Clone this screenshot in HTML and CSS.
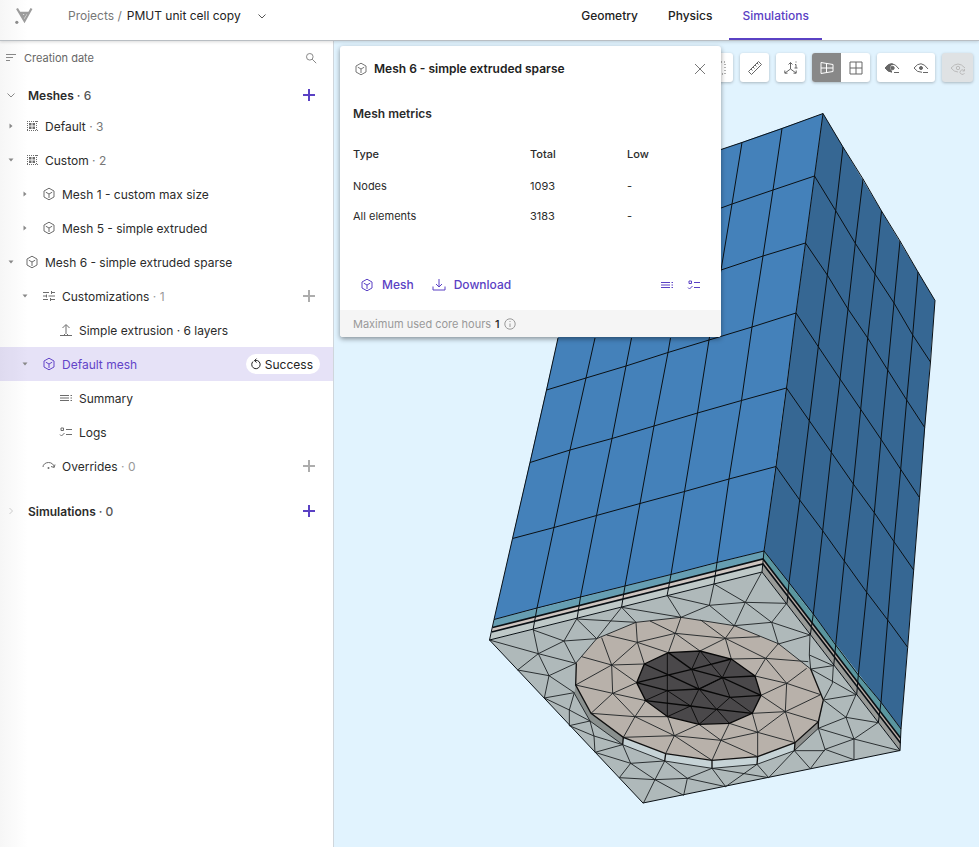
FILE: index.html
```html
<!DOCTYPE html>
<html lang="en">
<head>
<meta charset="utf-8">
<title>PMUT unit cell copy</title>
<link rel="stylesheet" href="styles.css">
</head>
<body>
<svg class="sprite" aria-hidden="true">
  <symbol id="cube" viewBox="0 0 14 14"><path d="M7 1.200 12 4v6L7 12.800 2 10V4ZM3.800 5.200 7 7l3.200-1.800M7 7v4"/></symbol>
  <symbol id="folder-grid" viewBox="0 0 14 14"><path d="M2 2.500h11M2 11.500h11M2.500 2v10M11.500 2v10" stroke-dasharray="1 1"/><path d="M4 4h2.500v2.500H4zM7.500 4H10v2.500H7.500zM4 7.500h2.500V10H4zM7.500 7.500H10V10H7.500z" fill="currentColor" stroke="none"/></symbol>
  <symbol id="plus" viewBox="0 0 14 14"><path d="M7 1v12M1 7h12"/></symbol>
  <symbol id="caret-down" viewBox="0 0 6 6"><path d="M.5 1.500h5L3 4.500z" fill="currentColor" stroke="none"/></symbol>
  <symbol id="caret-right" viewBox="0 0 6 6"><path d="M1.500.5v5l3-2.500z" fill="currentColor" stroke="none"/></symbol>
  <symbol id="chevron-down" viewBox="0 0 10 10"><path d="m1.500 3.500 3.500 3.500 3.500-3.500"/></symbol>
  <symbol id="chevron-right" viewBox="0 0 10 10"><path d="m3.500 2 3 3-3 3"/></symbol>
  <symbol id="summary" viewBox="0 0 14 14"><path d="M1 4.500h9M1 7h9M1 9.500h9M11.500 4.500h1.500M11.500 7h1.500M11.500 9.500h1.500"/></symbol>
  <symbol id="logs" viewBox="0 0 14 14"><path d="M2 3h2.500v2.500H2zM7 4.500h6M7 9.500h6M1 9.500l1.500 1.500 3-3"/></symbol>
  <symbol id="tune" viewBox="0 0 14 14"><path d="M1 3.500h6M9.500 3.500H13M9.500 2v3M1 7h3M6.500 7H13M4.500 5.500v3M1 10.500h5M8.500 10.500H13M8.500 9v3"/></symbol>
  <symbol id="extrude" viewBox="0 0 14 14"><path d="M7 11V2M3.500 5 7 1.500 10.500 5M1 12.500h4.500V11M13 12.500H8.500V11M1 12.500h12"/></symbol>
  <symbol id="override" viewBox="0 0 14 14"><path d="M1 8a5.500 4.500 0 0 1 11 0M9 7.500 12.200 8.500 13 5.500"/><circle cx="6.500" cy="9" r="1" fill="currentColor" stroke="none"/></symbol>
  <symbol id="download" viewBox="0 0 14 14"><path d="M7 1v7.500M4 6l3 3 3-3M1 8.500V12h12V8.500"/></symbol>
</svg>

<header class="topbar">
  <a class="logo" href="#" aria-label="Home">
    <svg viewBox="0 0 20 18"><path d="M3 1.500 10.500 14 17.500 1.500M5.500 5.800h9M6.500 6.500 10 9.500l2-3" fill="none" stroke="#9c9c9c" stroke-width="2.200"/><circle cx="2.800" cy="15.300" r="1.600" fill="#8c8c8c"/></svg>
  </a>
  <nav class="crumbs" aria-label="Breadcrumb">
    <a href="#">Projects /</a>
    <button class="project" type="button">PMUT unit cell copy <svg class="icon i10"><use href="#chevron-down"/></svg></button>
  </nav>
  <nav class="tabs" aria-label="Sections">
    <a href="#">Geometry</a>
    <a href="#">Physics</a>
    <a class="active" href="#" aria-current="page">Simulations</a>
  </nav>
</header>

<div class="workspace">
  <aside class="sidebar">
    <div class="filter">
      <button type="button" class="sort"><svg class="icon i12" viewBox="0 0 12 12"><path d="M1 2.500h10M1 5.500h7M1 8.500h4"/></svg>Creation date</button>
      <button type="button" class="search" aria-label="Search"><svg class="icon i12" viewBox="0 0 12 12"><circle cx="4.800" cy="4.800" r="3.300"/><path d="m7.200 7.200 4 4"/></svg></button>
    </div>

    <div class="section">
      <button type="button" class="toggle" aria-label="Collapse meshes"><svg class="icon i10"><use href="#chevron-down"/></svg></button>
      <h2>Meshes <span>· 6</span></h2>
      <button type="button" class="add primary" aria-label="Add mesh"><svg class="icon i14"><use href="#plus"/></svg></button>
    </div>
    <ul class="tree">
      <li class="row l0"><button type="button" class="toggle" aria-label="Expand"><svg class="icon i6"><use href="#caret-right"/></svg></button><svg class="icon i14"><use href="#folder-grid"/></svg><span>Default <i>· 3</i></span></li>
      <li class="row l0"><button type="button" class="toggle" aria-label="Collapse"><svg class="icon i6"><use href="#caret-down"/></svg></button><svg class="icon i14"><use href="#folder-grid"/></svg><span>Custom <i>· 2</i></span></li>
      <li class="row l1"><button type="button" class="toggle" aria-label="Expand"><svg class="icon i6"><use href="#caret-right"/></svg></button><svg class="icon i14"><use href="#cube"/></svg><span>Mesh 1 - custom max size</span></li>
      <li class="row l1"><button type="button" class="toggle" aria-label="Expand"><svg class="icon i6"><use href="#caret-right"/></svg></button><svg class="icon i14"><use href="#cube"/></svg><span>Mesh 5 - simple extruded</span></li>
      <li class="row l0"><button type="button" class="toggle" aria-label="Collapse"><svg class="icon i6"><use href="#caret-down"/></svg></button><svg class="icon i14"><use href="#cube"/></svg><span>Mesh 6 - simple extruded sparse</span></li>
      <li class="row l1"><button type="button" class="toggle" aria-label="Collapse"><svg class="icon i6"><use href="#caret-down"/></svg></button><svg class="icon i14"><use href="#tune"/></svg><span>Customizations <i class="faint">· 1</i></span><button type="button" class="add" aria-label="Add customization"><svg class="icon i14"><use href="#plus"/></svg></button></li>
      <li class="row l2"><svg class="icon i14"><use href="#extrude"/></svg><span>Simple extrusion · 6 layers</span></li>
      <li class="row l1 selected"><button type="button" class="toggle" aria-label="Collapse"><svg class="icon i6"><use href="#caret-down"/></svg></button><svg class="icon i14"><use href="#cube"/></svg><span>Default mesh</span>
        <button type="button" class="status"><svg class="icon i12" viewBox="0 0 12 12"><path d="M3 3.500A4.200 4.200 0 1 0 7.500 2.600M7.500 2.600H4.500M6.500.6l-2 2 2 2"/></svg><span>Success</span></button></li>
      <li class="row l2"><svg class="icon i14"><use href="#summary"/></svg><span>Summary</span></li>
      <li class="row l2"><svg class="icon i14"><use href="#logs"/></svg><span>Logs</span></li>
      <li class="row l1"><svg class="icon i14 leaf"><use href="#override"/></svg><span>Overrides <i class="faint">· 0</i></span><button type="button" class="add" aria-label="Add override"><svg class="icon i14"><use href="#plus"/></svg></button></li>
    </ul>
    <div class="section simulations">
      <button type="button" class="toggle dim" aria-label="Expand simulations"><svg class="icon i10"><use href="#chevron-right"/></svg></button>
      <h2>Simulations <span>· 0</span></h2>
      <button type="button" class="add primary" aria-label="Add simulation"><svg class="icon i14"><use href="#plus"/></svg></button>
    </div>
  </aside>

  <main class="viewport">
    <svg class="model" viewBox="334 41 645 806" preserveAspectRatio="xMinYMin meet" role="img" aria-label="Extruded mesh">
      <path fill="#4481ba" d="M558 338 590 195 721 149.500 823 113.500 764 551 494 619.500z"/>
      <path fill="#366793" d="M823 113.500 935 300.500 901 729 764 551z"/>
      <path fill="#669eb2" d="M494 619.500 764 551V559L492.500 627.500z"/>
      <path fill="#5a969f" d="M764 551 901 729 900.500 738 763 559z"/>
      <path fill="#cfc5c0" d="M492.500 627.500 763 559V564L491.700 632z"/>
      <path fill="#b7aaa3" d="M763 559 900.500 738V743L763 564z"/>
      <path fill="#bfc9c8" d="M491.700 632 763 564 762 572 489.500 640z"/>
      <path fill="#999b98" d="M763 564 900.500 743 900 750.500 762 572z"/>
      <path fill="#afb9ba" d="M489.500 640 762 572 900 750.500 643 803z"/>
      <g class="edges">
        <path d="M721 149.500 742 142.500 782 128.500 823 113.500M721 208 732 204 773 190 814.500 176M721 270 763 256 805.500 243M546.500 390 586 378 626 366 668 352.500 709 340 752 327 796 313M530 462.500 570 450 612 438.500 654 426 697.500 413 741.500 400.500 786.500 388M512.500 538.500 554 527.500 596.500 515.500 640 503.500 684.500 491.500 729 479 776 466.500M494 619.500 537 608 580.500 597 625 586 671 574.500 717 562.500 764 551"/>
        <path d="M558 338 546.500 390 530 462.500 512.500 538.500 494 619.500 489.500 640M595 338 586 378 570 450 554 527.500 537 608 533 630M631.500 338 626 366 612 438.500 596.500 515.500 580.500 597 577 619M670.500 338 668 352.500 654 426 640 503.500 625 586 621.500 607.500M742 142.500 732 204 721 270 709 340 697.500 413 684.500 491.500 671 574.500 667 596M782 128.500 773 190 763 256 752 327 741.500 400.500 729 479 717 562.500 714 584M823 113.500 814.500 176 805.500 243 796 313 786.500 388 776 466.500 764 551 762 572"/>
        <path d="M823 113.500 843 147 863 179 881.500 211 900 241 918 272 935 300.500M814.500 176 835.700 210.700 855.300 243.300 875 274 894 303 912.700 335 930.500 362M805.500 243 827.300 275 848 309 867.700 338 887.700 370 906.700 400 924.700 427.500M796 313 818.300 346.700 840 379 860.700 409.300 881 439.300 900.700 469.300 919.500 497.700M786.500 388 809.300 420.700 831.300 452.300 853.300 484 874.300 512.700 894 541.700 913.700 570M776 466.500 799.700 500 822.700 530.700 844.300 561 866.700 592.300 887.700 620 907.700 647.300M764 551 789 582.700 813.300 614 835.700 645 858.300 675 881 702.300 901 729"/>
        <path d="M843 147 835.700 210.700 827.300 275 818.300 346.700 809.300 420.700 799.700 500 789 582.700 787 603.700M863 179 855.300 243.300 848 309 840 379 831.300 452.300 822.700 530.700 813.300 614 810.300 635M881.500 211 875 274 867.700 338 860.700 409.300 853.300 484 844.300 561 835.700 645 833.700 665.700M900 241 894 303 887.700 370 881 439.300 874.300 512.700 866.700 592.300 858.300 675 856.700 694.700M918 272 912.700 335 906.700 400 900.700 469.300 894 541.700 887.700 620 881 702.300 878.300 722.700M935 300.500 930.500 362 924.700 427.500 919.500 497.700 913.700 570 907.700 647.300 901 729 900 750.500"/>
        <path d="M489.500 640 762 572 900 750.500 643 803z"/>
        <path class="seam" d="M492.500 627.500 763 559 900.500 738M491.700 632 763 564 900.500 743"/>
      </g>
      <g transform="translate(480 540) scale(.33333)">
        <path fill="#b8b1aa" d="M289 370 350 296 468 247 603 232 763 257 895 311 992 387 1030 480 1015 545 945 608 833 650 696 661 557 641 430 592 333 520 287 435z"/>
        <path fill="#8a908e" d="M287 435 333 520 430 592 428 614 330 543 283 460z"/>
        <path fill="#c6d3d6" d="M430 592 557 641 696 661 833 650 945 608 943 632 831 673 696 685 554 663 428 614z"/>
        <path fill="#8c8e8c" d="M1030 480 1015 545 945 608 943 632 1015 565z"/>
        <path fill="#4a484a" d="M493 372 565 338 660 333 754 357 825 408 843 466 817 520 748 550 657 553 563 530 497 482 470 428z"/>
        <g class="mesh">
          <path d="M28 300 175 341 160 270 252 303 290 237 350 296M290 237 468 247 425 202 603 232 562 167 688 196 702 132 796 187 845 97M603 232 688 196 763 257 796 187 688 196M796 187 920 190 875 247 796 187M763 257 875 247 990 285 895 312 875 247M990 285 988 345 992 387 1060 377 988 345M1060 377 1057 430 1030 480 1128 464 992 387M1030 480 1098 532 1128 464M1098 532 1194 548 1122 597 1098 532 1015 565 1122 597 1259 632M1015 565 1035 628 1122 597V659L1035 628 991 686 943 632H1035M943 632 866 713 831 673 737 740 696 685 866 713M287 370 350 296 468 247 603 232 763 257 895 311 992 387M350 296 425 202"/>
          <path d="M113 390 175 341 252 303 287 370 175 341 207 407 113 390M252 303 350 296M207 407 287 370M207 407 193 474 283 458 207 407M193 474 268 510 283 458M268 510V557L330 543 268 510M268 557 342 588 330 543M342 588 345 637 428 614 342 588M345 637 452 670 428 614M452 670 554 663 525 719 452 670 418 713 525 719 490 790M525 719 611 766 622 715 525 719M554 663 622 715 696 685M622 715 737 740M283 460 330 543 428 614 554 663 696 685 831 673 943 632 1015 565"/>
          <path d="M365 293 395 375 305 350M380 285 472 307 468 247M472 307 395 375 287 435 398 460 395 375 493 372 472 307 565 338 586 280 472 307M395 375 470 428 398 460 333 520 465 530 398 460 497 482 465 530 430 592 583 587 465 530 563 530 583 587 557 641M583 587 657 553 723 601 583 587 696 661 723 601 833 650 833 577 723 601 748 550 833 577 817 520 916 515 833 577 945 608 916 515 1015 545M916 515 1022 464 920 430 916 515 843 466 920 430 825 408 857 355 920 430 980 385M985 365 857 355 754 357 736 295 857 355 895 311M736 295 660 333 586 280 736 295 763 257M840 290 736 295 662 240M586 280 603 232M510 243 586 280"/>
        </g>
        <g class="mesh core">
          <path d="M562 338V530L632 498 562 452 492 483M660 333 635 388 657 447 632 498 657 553 710 508 657 447M660 333 727 413 754 357M727 413 750 472 710 508 748 550M750 472 817 520M727 413 657 447"/>
          <path class="bold" d="M470 428 635 388 754 357M493 372 562 403 657 447 750 472 843 466M565 338 635 388 727 413 825 408M497 482 632 498 710 508 817 520M470 428 562 452 657 447 727 413 843 466"/>
          <path class="bold" d="M493 372 565 338 660 333 754 357 825 408 843 466 817 520 748 550 657 553 563 530 497 482 470 428z"/>
        </g>
        <path class="rim" d="M289 370 287 435 333 520 430 592 557 641 696 661 833 650 945 608 1015 545 1030 480M430 592 428 614M557 641 554 663M696 661V685M833 650 831 673M945 608 943 632M1015 545V565M1030 480 992 387"/>
      </g>
    </svg>

    <div class="toolbar" role="toolbar" aria-label="View tools">
      <div class="group"><button type="button" aria-label="Box select"><svg class="icon i16" viewBox="0 0 16 16"><path d="M1 2h13v12H1z" stroke-dasharray="1 2"/></svg></button></div>
      <div class="group"><button type="button" aria-label="Measure"><svg class="icon i16" viewBox="0 0 16 16"><path d="M1.500 11.500 11.500 1.500l3 3-10 10zM4 9l1.500 1.500M6 7l1.500 1.500M8 5l1.500 1.500M10 3l1.500 1.500"/></svg></button></div>
      <div class="group"><button type="button" aria-label="Axes"><svg class="icon i16" viewBox="0 0 16 16"><path d="M7.500 9V2.500M5.500 4.500l2-2 2 2M7.500 9l-5.500 4M1.800 10.500v2.700h2.700M7.500 9l5.500 4M13.200 10.500v2.700h-2.700M13 1.500v1M12 4.500h1V8M11.500 8h3"/></svg></button></div>
      <div class="group"><button type="button" class="on" aria-label="Perspective view"><svg class="icon i16" viewBox="0 0 16 16"><path d="M2 2.500 14 4.500v7L2 13.500zM2 8h12M7.500 3.500v9"/></svg></button><button type="button" aria-label="Orthographic view"><svg class="icon i16" viewBox="0 0 16 16"><path d="M2 2h12v12H2zM2 8h12M8 2v12"/></svg></button></div>
      <div class="group"><button type="button" aria-label="Hide selected"><svg class="icon i16" viewBox="0 0 16 16"><path d="M1 8q7-9 14 1M1 8q3 4 7 4M10 12.500h5"/><path d="M1 8q3-5 7-4.500l2 1-3 1-1 3 2 2.500v1.500Q3.500 12 1 8z" fill="currentColor" stroke="none"/><circle cx="8.500" cy="8" r="1.700" fill="currentColor"/></svg></button><button type="button" aria-label="Show selected"><svg class="icon i16" viewBox="0 0 16 16"><path d="M9 12.300Q4 12.500 1 8q7-9 14 1M10 12.500h5"/><circle cx="8" cy="8" r="1.500" fill="currentColor"/></svg></button></div>
      <div class="group disabled"><button type="button" disabled aria-label="Reset visibility"><svg class="icon i16" viewBox="0 0 16 16"><path d="M8 12Q4 12 1 8q7-8 14 0"/><circle cx="8" cy="8" r="1.700"/><path d="M14 10.500a2.300 2.300 0 1 0 .5 2.500M14.500 9v2h-2"/></svg></button></div>
    </div>

    <section class="panel" aria-labelledby="panel-title">
      <header>
        <svg class="icon i14"><use href="#cube"/></svg>
        <h1 id="panel-title">Mesh 6 - simple extruded sparse</h1>
        <button type="button" aria-label="Close"><svg class="icon i12" viewBox="0 0 12 12"><path d="m1 1 10 10M11 1 1 11"/></svg></button>
      </header>
      <h2>Mesh metrics</h2>
      <table>
        <thead><tr><th scope="col">Type</th><th scope="col">Total</th><th scope="col">Low</th></tr></thead>
        <tbody>
          <tr><td>Nodes</td><td>1093</td><td>-</td></tr>
          <tr><td>All elements</td><td>3183</td><td>-</td></tr>
        </tbody>
      </table>
      <div class="actions">
        <button type="button"><svg class="icon i14"><use href="#cube"/></svg>Mesh</button>
        <button type="button"><svg class="icon i14"><use href="#download"/></svg>Download</button>
        <button type="button" class="push" aria-label="Summary"><svg class="icon i14"><use href="#summary"/></svg></button>
        <button type="button" aria-label="Logs"><svg class="icon i14"><use href="#logs"/></svg></button>
      </div>
      <footer>Maximum used core hours <b>1</b> <svg class="icon i12" viewBox="0 0 12 12"><circle cx="6" cy="6" r="5.200"/><path d="M6 5.500V9M6 3v1"/></svg></footer>
    </section>
  </main>
</div>
</body>
</html>
```

FILE: styles.css
```css
* { box-sizing: border-box; }

body {
  margin: 0;
  min-height: 100vh;
  display: flex;
  flex-direction: column;
  font: 12px/20px Inter, "Liberation Sans", sans-serif;
  color: #2b2b2b;
  background: #fff;
}

button {
  display: flex;
  align-items: center;
  justify-content: center;
  padding: 0;
  border: 0;
  background: none;
  font: inherit;
  color: inherit;
}

a { color: inherit; text-decoration: none; }
h1, h2 { margin: 0; font-size: 12px; line-height: 20px; font-weight: 600; }

.sprite { display: none; }
.icon { flex: none; display: block; fill: none; stroke: currentColor; stroke-width: 1px; }
.i6 { width: 6px; height: 6px; }
.i10 { width: 10px; height: 10px; }
.i12 { width: 12px; height: 12px; }
.i14 { width: 14px; height: 14px; }
.i16 { width: 16px; height: 16px; }

/* Top bar */
.topbar {
  position: relative;
  z-index: 2;
  display: flex;
  align-items: stretch;
  height: 41px;
  padding: 0 157px 0 14px;
  border-bottom: 1px solid #b9bec3;
  box-shadow: 0 1px 3px rgba(0, 0, 0, .15);
  background: linear-gradient(90deg, #f6f6f6, #fff 28px);
}
.logo { width: 20px; margin: 7px 34px 0 0; }
.logo svg { display: block; width: 20px; height: 18px; }
.crumbs { display: flex; gap: 5px; height: 32px; align-items: center; color: #777; }
.project { gap: 16px; color: #222; }
.project .icon { color: #555; }
.tabs { display: flex; gap: 4px; margin-left: auto; font-weight: 500; color: #222; }
.tabs a { padding: 6px 13px 0; border-bottom: 2px solid transparent; }
.tabs .active { color: #5a41c4; border-color: #5a41c4; }

.workspace { flex: 1; display: flex; }

/* Sidebar */
.sidebar {
  flex: 0 0 334px;
  border-right: 1px solid #cfd6dc;
  background: linear-gradient(90deg, #f6f6f6, #fff 28px);
}
.filter {
  display: flex;
  justify-content: space-between;
  align-items: center;
  height: 34px;
  margin-bottom: 6px;
  padding: 0 16px 0 5px;
  font-size: 11px;
  color: #666;
}
.filter .icon { color: #888; }
.sort { gap: 7px; }
.section, .row { display: flex; align-items: center; padding-right: 13px; }
.section { height: 28px; padding-left: 3px; }
.section h2 { margin-left: 9px; padding-top: 2px; }
.section h2 span { font-weight: 500; color: #555; }
.simulations { margin-top: 14px; }
.toggle { flex: none; width: 16px; height: 16px; color: #888; }
.dim { color: #ccc; }
.add { width: 22px; height: 22px; margin-left: auto; color: #adadad; }
.add .icon { stroke-width: 2px; }
.primary { color: #5a41c4; }

.tree { list-style: none; margin: 0; padding: 0; }
.row { height: 34px; }
.row span { padding-top: 2px; }
.row > .icon { margin-right: 6px; color: #6c6c6c; }
.row i { font-style: normal; color: #777; }
.row .faint { color: #999; }
.l0 { padding-left: 3px; }
.l0 > .icon { margin-left: 6px; }
.l1 { padding-left: 17px; }
.l1 > .icon { margin-left: 9px; }
.l1 > .leaf { margin-left: 25px; }
.l2 { padding-left: 59px; }
.selected { background: rgba(88, 60, 200, .15); color: #6244c8; }
.selected > .icon { color: #6244c8; }
.status {
  gap: 3px;
  height: 20px;
  margin-left: auto;
  padding: 0 7px 0 4px;
  border-radius: 10px;
  background: #fff;
  color: #222;
}

/* Viewport */
.viewport { position: relative; flex: 1; min-width: 0; background: #e1f3fe; }
.model { display: block; width: 100%; }
.edges { fill: none; stroke: #0a1015; stroke-width: 1; }
.edges .seam { stroke-width: 1.6; }
.mesh { fill: none; stroke: #1c2022; stroke-width: 2.7; }
.core { stroke: #080808; }
.core .bold { stroke-width: 4; }
.rim { fill: none; stroke: #111; stroke-width: 4; }

.toolbar { position: absolute; top: 12px; right: 6px; display: flex; gap: 7px; color: #666; }
.group {
  display: flex;
  overflow: hidden;
  border-radius: 3px;
  background: #fff;
  box-shadow: 0 1px 3px rgba(0, 0, 0, .25);
}
.group button { width: 29px; height: 29px; }
.group .on { background: #888; color: #fff; }
.disabled { background: #dfe2e4; }
.disabled button { width: 31px; color: #bbb; }

/* Mesh details */
.panel {
  position: absolute;
  top: 5px;
  left: 6px;
  width: 381px;
  overflow: hidden;
  border-radius: 3px;
  background: #fff;
  box-shadow: 0 2px 5px rgba(0, 0, 0, .4);
}
.panel header { display: flex; align-items: center; gap: 6px; height: 45px; padding: 0 15px 0 14px; }
.panel header .icon { color: #777; }
.panel header button { margin-left: auto; }
.panel h1 { color: #222; }
.panel h2 { margin: 13px; }
.panel table { width: 354px; margin: 0 13px; border-collapse: collapse; table-layout: fixed; font-size: 11px; }
.panel th, .panel td { padding: 0; text-align: left; font-weight: 400; }
.panel th { height: 34px; font-weight: 500; width: 50%; }
.panel th + th { width: 97px; }
.panel th + th + th { width: 80px; }
.panel td { height: 30px; }
.actions { display: flex; align-items: center; height: 30px; margin: 39px 20px 10px; gap: 18px; font-weight: 500; color: #5a41c4; }
.actions button { gap: 8px; }
.actions .push { margin-left: auto; }
.actions button:last-child { margin-left: -5px; }
.panel footer { display: flex; align-items: center; gap: 4px; height: 27px; padding: 0 13px; background: #f5f5f5; font-size: 11px; color: #999; }
.panel footer b { font-weight: 500; color: #222; }
```
